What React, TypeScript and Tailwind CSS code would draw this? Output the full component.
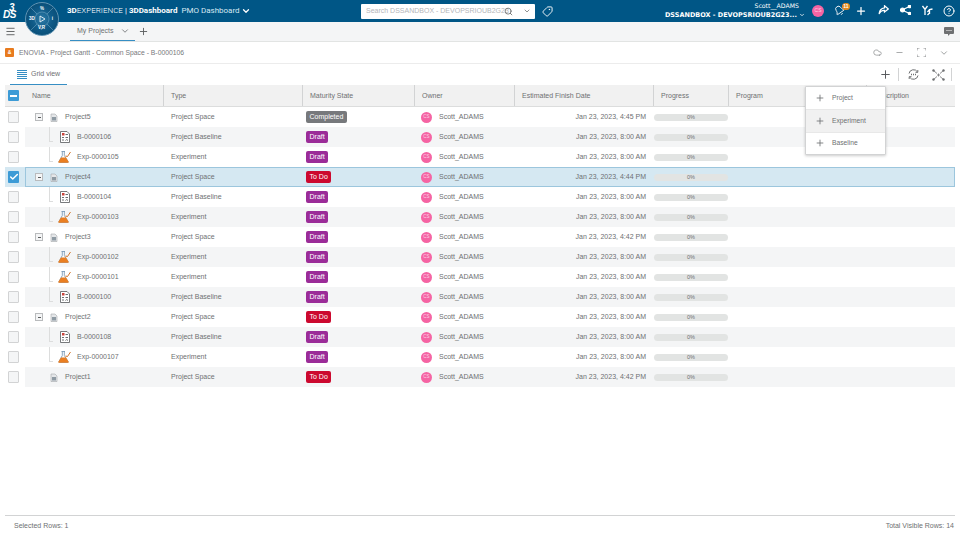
import { ChevronDown, CircleHelp, Cloud, Menu, Minus, Plus, Search, Tag, Check, Bell } from "lucide-react";

type Row = {
  name: string;
  type: string;
  state: "Completed" | "Draft" | "To Do";
  date: string;
  level: 0 | 1;
  toggle?: boolean;
  selected?: boolean;
};

const rows: Row[] = [
  { name: "Project5", type: "Project Space", state: "Completed", date: "Jan 23, 2023, 4:45 PM", level: 0, toggle: true },
  { name: "B-0000106", type: "Project Baseline", state: "Draft", date: "Jan 23, 2023, 8:00 AM", level: 1 },
  { name: "Exp-0000105", type: "Experiment", state: "Draft", date: "Jan 23, 2023, 8:00 AM", level: 1 },
  { name: "Project4", type: "Project Space", state: "To Do", date: "Jan 23, 2023, 4:44 PM", level: 0, toggle: true, selected: true },
  { name: "B-0000104", type: "Project Baseline", state: "Draft", date: "Jan 23, 2023, 8:00 AM", level: 1 },
  { name: "Exp-0000103", type: "Experiment", state: "Draft", date: "Jan 23, 2023, 8:00 AM", level: 1 },
  { name: "Project3", type: "Project Space", state: "Draft", date: "Jan 23, 2023, 4:42 PM", level: 0, toggle: true },
  { name: "Exp-0000102", type: "Experiment", state: "Draft", date: "Jan 23, 2023, 8:00 AM", level: 1 },
  { name: "Exp-0000101", type: "Experiment", state: "Draft", date: "Jan 23, 2023, 8:00 AM", level: 1 },
  { name: "B-0000100", type: "Project Baseline", state: "Draft", date: "Jan 23, 2023, 8:00 AM", level: 1 },
  { name: "Project2", type: "Project Space", state: "To Do", date: "Jan 23, 2023, 8:00 AM", level: 0, toggle: true },
  { name: "B-0000108", type: "Project Baseline", state: "Draft", date: "Jan 23, 2023, 8:00 AM", level: 1 },
  { name: "Exp-0000107", type: "Experiment", state: "Draft", date: "Jan 23, 2023, 8:00 AM", level: 1 },
  { name: "Project1", type: "Project Space", state: "To Do", date: "Jan 23, 2023, 4:42 PM", level: 0 },
];

const stateColors = {
  Completed: "bg-[#77797c]",
  Draft: "bg-[#9b2c98]",
  "To Do": "bg-[#cc092f]",
};

const gridCols = "grid grid-cols-[139px_139px_112px_100px_139px_75px_138px_1fr]";

const FlaskIcon = () => (
  <svg width="13" height="12" viewBox="0 0 13 12" className="shrink-0">
    <path d="M3.500.5h3.500M4.300.5v4L1 10.500q-.3 1 .8 1h7.400q1.100 0 .8-1L6.300 4.500v-4" fill="#fff" stroke="#6d8fae" strokeWidth="0.800" />
    <path d="M3 6.500h5l2.800 4.500q.2.800-.8.800H1q-1 0-.8-.8z" fill="#ea7f22" />
    <path d="M7.500 5l2 .5L12.500 1" fill="none" stroke="#d0742a" strokeWidth="1" />
  </svg>
);

const BaselineIcon = () => (
  <svg width="10" height="12" viewBox="0 0 10 12" className="shrink-0">
    <path d="M.5.500h6.500l2.500 2.500v8.500h-9z" fill="#fff" stroke="#55585c" strokeWidth="0.800" />
    <rect x="2" y="2" width="2.500" height="2.500" fill="#c9433a" />
    <path d="M5.500 3.500h2.500M2 6.500h2M5.500 6.500h2.500M2 9h2M5.500 9.500l1.200-1 1.300 1" stroke="#44474a" strokeWidth="0.800" fill="none" />
  </svg>
);

const SpaceIcon = () => (
  <svg width="8" height="9" viewBox="0 0 8 9" className="shrink-0">
    <path d="M1 1h4l2 2v5.500H1z" fill="#e4e6e8" stroke="#a5a8ab" strokeWidth="0.600" />
    <rect x="2" y="4" width="4" height="3.500" fill="#8e9aa3" />
  </svg>
);

const Checkbox = ({ checked }: { checked?: boolean }) =>
  checked ? (
    <span className="flex h-[12px] w-[11px] items-center justify-center rounded-[1px] bg-[#3d9bd6]">
      <Check size={10} strokeWidth={3.500} color="#fff" />
    </span>
  ) : (
    <span className="block h-[12px] w-[11px] rounded-[1px] border border-[#d2d3d4] bg-[#f4f5f6]" />
  );

const NameCell = ({ row }: { row: Row }) => {
  if (row.level === 1) {
    return (
      <div className="relative flex h-full items-center pl-[33px]">
        <span className="absolute bottom-[5px] left-[24px] top-0 w-[4px] border-b border-l border-[#dcdddd]" />
        <span className="flex w-[13px] justify-center">{row.name.startsWith("Exp") ? <FlaskIcon /> : <BaselineIcon />}</span>
        <span className="ml-[6px]">{row.name}</span>
      </div>
    );
  }
  return (
    <div className="flex h-full items-center pl-[10px]">
      {row.toggle ? (
        <span className="flex h-[8px] w-[8px] items-center justify-center border border-[#b9bbbd] bg-[#f4f5f6]">
          <span className="h-px w-[3px] bg-[#5b5d5e]" />
        </span>
      ) : (
        <span className="w-[8px]" />
      )}
      <span className="ml-[7px]">
        <SpaceIcon />
      </span>
      <span className="ml-[7px]">{row.name}</span>
    </div>
  );
};

const GridRow = ({ row, index }: { row: Row; index: number }) => {
  const bg = row.selected
    ? "bg-[#d5e8f2] shadow-[inset_0_0_0_1px_#9cc6dd]"
    : index % 2 === 1
      ? "bg-[#f4f5f6]"
      : "bg-white";
  return (
    <div className="flex h-[20px]">
      <div className={`flex w-[20px] items-center pl-[3px] ${row.selected ? "bg-[#d5e8f2]" : ""}`}>
        <Checkbox checked={row.selected} />
      </div>
      <div className={`${gridCols} h-[20px] flex-1 items-center text-[7px] text-[#6e7072] ${bg}`}>
        <NameCell row={row} />
        <div className="pl-[7px]">{row.type}</div>
        <div className="pl-[3px]">
          <span className={`inline-block h-[12px] rounded-[2px] px-[3.500px] text-[7px] leading-[12px] text-white ${stateColors[row.state]}`}>
            {row.state}
          </span>
        </div>
        <div className="flex items-center pl-[6px]">
          <span className="flex h-[11px] w-[11px] items-center justify-center rounded-full bg-[#f564a3] text-[4.500px] text-[#fbd0e4]">CS</span>
          <span className="ml-[7px]">Scott_ADAMS</span>
        </div>
        <div className="pr-[8px] text-right">{row.date}</div>
        <div>
          <div className="h-[7px] w-[74px] rounded-full bg-[#e2e4e3] text-center text-[5.500px] leading-[7px]">0%</div>
        </div>
        <div />
        <div />
      </div>
    </div>
  );
};

const TopBar = () => (
  <div className="flex h-[22px] items-center bg-[#005686] text-white">
    <div className="ml-[3px] w-[64px]">
      <span className="block w-[17px] text-[10px] font-bold italic leading-[7px] tracking-[-0.500px] [text-indent:6px]">3 DS</span>
    </div>
    <div className="flex w-[294px] items-center text-[8px] [font-family:Roboto,sans-serif]">
      <span className="font-bold">3D</span>
      <span className="font-light">EXPERIENCE</span>
      <span className="mx-[2px]">|</span>
      <span className="font-bold">3DDashboard</span>
      <span className="ml-[4px] text-[#d5e8f2]">PMO Dashboard</span>
      <ChevronDown size={10} strokeWidth={3} className="ml-[1px]" />
    </div>
    <div className="flex h-[15px] w-[174px] items-center rounded-[1px] bg-white pl-[5px] text-[7px] text-[#b4b6ba]">
      <span className="w-[139px] whitespace-nowrap">Search DSSANDBOX - DEVOPSRIOUB2G23</span>
      <Search size={9} color="#5b5d5e" className="-ml-[1px] shrink-0" />
      <ChevronDown size={8} color="#5b5d5e" className="ml-[10px] shrink-0" />
    </div>
    <Tag size={11} className="ml-[7px] -scale-x-100" />
    <div className="ml-auto flex flex-col items-end pr-[7px] [font-family:'DejaVu_Sans',sans-serif]">
      <span className="mr-[6px] text-[6.200px] leading-[8px]">Scott__ADAMS</span>
      <span className="flex items-center text-[6.500px] font-bold leading-[10px]">
        DSSANDBOX - DEVOPSRIOUB2G23...
        <ChevronDown size={6} strokeWidth={3} className="ml-[2px]" />
      </span>
    </div>
    <span className="flex h-[12px] w-[12px] items-center justify-center rounded-full bg-[#f564a3] text-[5px] text-[#fbd0e4]">CS</span>
    <div className="ml-[4px] flex">
      <div className="relative flex w-[22px] justify-center">
        <Bell size={11} strokeWidth={1.800} className="-rotate-[35deg]" />
        <span className="absolute left-[14px] -top-[2px] flex h-[7px] w-[8px] items-center justify-center rounded-full bg-[#e28a1e] text-[5px] font-bold">11</span>
      </div>
      <div className="flex w-[22px] justify-center">
        <Plus size={12} strokeWidth={2.500} />
      </div>
      <div className="flex w-[22px] justify-center">
        <svg width="11" height="10" viewBox="0 0 11 10" fill="none" stroke="#fff" strokeWidth="1.200">
          <path d="M6.500.8L10.300 4 6.500 7V5.300Q3 5 1 9 1.500 3.500 6.500 2.800z" />
        </svg>
      </div>
      <div className="flex w-[22px] justify-center">
        <svg width="11" height="10" viewBox="0 0 11 10" fill="#fff" stroke="#fff" strokeWidth="1.200">
          <path d="M9.500 1.500L2 5l7.500 3.500" fill="none" />
          <circle cx="2.500" cy="5" r="2" />
          <circle cx="9.500" cy="1.500" r="1.200" />
          <circle cx="9.500" cy="8.500" r="1.200" />
        </svg>
      </div>
      <div className="flex w-[22px] justify-center">
        <svg width="11" height="11" viewBox="0 0 11 11" fill="none" stroke="#fff" strokeWidth="1.300">
          <path d="M.5 1l2.500 3.500L5.500 1M3 4.500V10M5.500 7l2-2.500L10.500 4M7.500 4.500V9M5.500 10l2.500-2.500" />
        </svg>
      </div>
      <div className="flex w-[22px] justify-center">
        <CircleHelp size={12} strokeWidth={2} />
      </div>
    </div>
  </div>
);

const TabBar = () => (
  <div className="flex h-[20px] items-stretch border-b border-[#e2e4e3] bg-[#f4f5f6]">
    <Menu size={11} color="#5b5d5e" className="ml-[5px] mt-[4px]" />
    <div className="ml-[54px] flex w-[65px] items-center border-b border-[#368ec4] pl-[7px] text-[7px] text-[#6e7072]">
      My Projects
      <ChevronDown size={10} className="ml-[6px]" />
    </div>
    <Plus size={11} color="#5b5d5e" className="ml-[3px] mt-[4px]" />
    <svg width="10" height="9" viewBox="0 0 10 9" className="ml-auto mr-[6px] mt-[5px]">
      <path d="M1 0h8q1 0 1 1v5q0 1-1 1H6L4 9V7H1Q0 7 0 6V1q0-1 1-1z" fill="#6e7072" />
      <path d="M2.500 3.500h5" stroke="#fff" strokeWidth="1" strokeDasharray="1 1" />
    </svg>
  </div>
);

const TitleBar = () => (
  <div className="flex h-[22px] items-center border-b border-[#ececec] bg-white pl-[5px] pr-[11px] text-[6.800px] text-[#77797c]">
    <span className="flex h-[9px] w-[9px] items-center justify-center rounded-[1px] bg-[#e87b1e] text-[5px] font-bold text-white">&</span>
    <span className="ml-[5px] pt-[1px]">ENOVIA - Project Gantt - Common Space - B-0000106</span>
    <div className="ml-auto flex items-center text-[#8e9092]">
      <Cloud size={9} />
      <Minus size={9} className="ml-[13px]" />
      <svg width="9" height="9" viewBox="0 0 9 9" fill="none" stroke="#8e9092" strokeWidth="1" className="ml-[13px]">
        <path d="M0 2.500V0h2.500M6.500 0H9v2.500M9 6.500V9H6.500M2.500 9H0V6.500" />
      </svg>
      <ChevronDown size={10} className="ml-[13px]" />
    </div>
  </div>
);

const Toolbar = () => (
  <div className="flex h-[21px] items-stretch bg-white pl-[10px] pr-[8px]">
    <div className="flex w-[57px] items-center border-b border-[#368ec4] pl-[7px] text-[7px] text-[#6e7072]">
      <svg width="10" height="9" viewBox="0 0 10 9" stroke="#368ec4" strokeWidth="1" className="shrink-0">
        <path d="M0 .5h10M0 2.500h10M0 4.500h10M0 6.500h10M0 8.500h10" />
      </svg>
      <span className="ml-[4px]">Grid view</span>
    </div>
    <div className="ml-auto flex items-center">
      <Plus size={13} strokeWidth={1.800} color="#55585c" />
      <span className="ml-[6px] h-[13px] w-px bg-[#d2d3d4]" />
      <svg width="11" height="11" viewBox="0 0 11 11" fill="none" stroke="#6e7072" strokeWidth="1" className="ml-[9px]">
        <path d="M1 4.500A4.600 4.600 0 0 1 9.500 3M10 6.500A4.600 4.600 0 0 1 1.500 8M9.800 1v2.300H7.500M1.200 10V7.700h2.300" />
        <path d="M3 5.500h5" strokeDasharray="1 1" strokeWidth="1.500" />
      </svg>
      <svg width="13" height="12" viewBox="0 0 13 12" fill="none" stroke="#6e7072" strokeWidth="0.800" className="ml-[13px]">
        <path d="M1.500 1.500l3.500 3M11.500 1.500L8 4.500M1.500 10.500L5 7.500M11.500 10.500L8 7.500" />
        <g fill="#6e7072" stroke="none">
          <circle cx="1.500" cy="1.500" r="1.200" />
          <circle cx="11.500" cy="1.500" r="1.200" />
          <circle cx="1.500" cy="10.500" r="1.200" />
          <circle cx="11.500" cy="10.500" r="1.200" />
        </g>
        <path d="M5 6h3M6.500 4.500v3" />
      </svg>
      <span className="ml-[6px] h-[13px] w-px bg-[#d2d3d4]" />
    </div>
  </div>
);

const headers = ["Name", "Type", "Maturity State", "Owner", "Estimated Finish Date", "Progress", "Program", "Description"];

const GridHeader = () => (
  <div className="flex h-[22px] border-b border-[#dcdddd] bg-[#f1f1f1]">
    <div className="flex w-[20px] items-center pl-[3px]">
      <span className="flex h-[11px] w-[11px] items-center justify-center rounded-[1px] bg-[#3d9bd6]">
        <span className="h-[2px] w-[7px] bg-white" />
      </span>
    </div>
    <div className={`${gridCols} flex-1 text-[7px] text-[#6e7072]`}>
      {headers.map((h, i) => (
        <div key={h} className={`flex items-center border-[#d2d3d4] pl-[7px] pt-[1px] ${i === headers.length - 1 ? "" : "border-r"}`}>
          {h}
        </div>
      ))}
    </div>
  </div>
);

const menuItems = ["Project", "Experiment", "Baseline"];

const AddMenu = () => (
  <div className="absolute left-[805px] top-[86px] w-[81px] rounded-[1px] border border-[#d2d3d4] bg-white text-[6.700px] text-[#6e7072] shadow-[0_1px_3px_rgba(0,0,0,0.2)]">
    {menuItems.map((item, i) => (
      <div key={item} className={`flex h-[22.400px] items-center pl-[9px] ${i === 1 ? "bg-[#f1f1f1]" : ""} ${i > 0 ? "border-t border-[#e8e8e8]" : ""}`}>
        <Plus size={10} strokeWidth={2} />
        <span className="ml-[7px]">{item}</span>
      </div>
    ))}
  </div>
);

const Compass = () => (
  <div className="absolute left-[25px] top-[2px] flex h-[34px] w-[34px] items-center justify-center rounded-full border border-[#5f93b3] bg-[radial-gradient(circle,#2f7ca8_0%,#0f5a87_45%,#04456b_100%)] text-[4.500px] font-bold text-white">
    <svg width="32" height="32" viewBox="0 0 32 32" fill="none" stroke="#7fb0cc" strokeWidth="0.500" className="absolute left-0 top-0">
      <circle cx="16" cy="16" r="7" />
      <path d="M5 5l6 6M27 5l-6 6M5 27l6-6M27 27l-6-6" />
    </svg>
    <span className="absolute left-[3px] top-[13px]">3D</span>
    <span className="absolute right-[5px] top-[13px]">i</span>
    <span className="absolute bottom-[3px] left-[12px]">V,R</span>
    <span className="absolute left-[14px] top-[3px]">%</span>
    <svg width="7" height="8" viewBox="0 0 7 8" fill="none" stroke="#fff" strokeWidth="0.800" className="relative">
      <path d="M1 1l5 3-5 3z" />
    </svg>
  </div>
);

export default function App() {
  return (
    <div className="relative flex h-[540px] w-[960px] flex-col overflow-hidden bg-white [font-family:'Liberation_Sans',Arial,sans-serif]">
      <TopBar />
      <TabBar />
      <TitleBar />
      <Toolbar />
      <div className="px-[5px]">
        <GridHeader />
        {rows.map((row, i) => (
          <GridRow key={row.name} row={row} index={i} />
        ))}
      </div>
      <div className="mx-[5px] mt-auto flex h-[25px] items-center justify-between border-t border-[#d2d3d4] px-[9px] pb-[4px] text-[7px] text-[#6e7072]">
        <span>Selected Rows: 1</span>
        <span className="-mr-[8px]">Total Visible Rows: 14</span>
      </div>
      <AddMenu />
      <Compass />
    </div>
  );
}
